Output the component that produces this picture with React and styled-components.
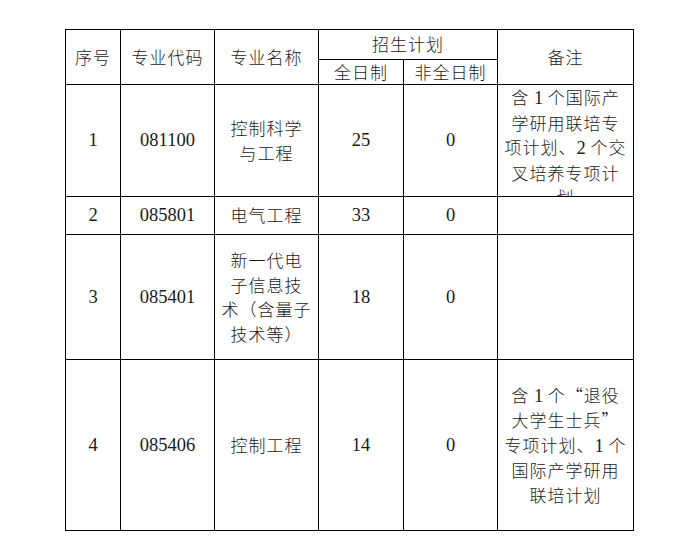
import React from "react";
import styled, { createGlobalStyle } from "styled-components";

const Global = createGlobalStyle`
  html, body { margin: 0; padding: 0; background: #fff; }
  body { font-family: "Liberation Serif", "Noto Sans CJK SC", serif; }
`;

const Page = styled.div`
  padding: 29px 0 0 65px;
`;

const Grid = styled.div`
  display: grid;
  width: max-content;
  grid-template-columns: 54px 93px 103px 84px 93px 135px;
  grid-template-rows: 29px 24px 111px 37px 124px 170px;
  gap: 1px;
  padding: 1px;
  background: #000;
`;

const Cell = styled.div`
  background: #fff;
  display: flex;
  flex-direction: column;
  align-items: center;
  justify-content: ${(p) => (p.$top ? "flex-start" : "center")};
  overflow: hidden;
  grid-row: span ${(p) => p.$rows || 1};
  grid-column: span ${(p) => p.$cols || 1};
  font-family: "Noto Sans CJK SC", sans-serif;
  font-weight: 300;
  font-size: 17px;
  letter-spacing: 1px;
  line-height: 24.5px;
  color: #1a1a1a;
  white-space: nowrap;
`;

const Line = styled.div`
  text-align: center;
`;

const Num = styled.span`
  font-family: "Liberation Serif", serif;
  font-weight: 400;
  font-size: 18.5px;
  letter-spacing: 0;
`;

const rows = [
  {
    no: "1",
    code: "081100",
    name: ["控制科学", "与工程"],
    full: "25",
    part: "0",
    top: true,
    note: [
      <>含<Num> 1 </Num>个国际产</>,
      "学研用联培专",
      <>项计划、<Num>2 </Num>个交</>,
      "叉培养专项计",
      "划",
    ],
  },
  { no: "2", code: "085801", name: ["电气工程"], full: "33", part: "0", note: [] },
  {
    no: "3",
    code: "085401",
    name: ["新一代电", "子信息技", "术（含量子", "技术等）"],
    full: "18",
    part: "0",
    note: [],
  },
  {
    no: "4",
    code: "085406",
    name: ["控制工程"],
    full: "14",
    part: "0",
    note: [
      <>含<Num> 1 </Num>个“退役</>,
      "大学生士兵”",
      <>专项计划、<Num>1 </Num>个</>,
      "国际产学研用",
      "联培计划",
    ],
  },
];

export default function App() {
  return (
    <Page>
      <Global />
      <Grid>
        <Cell $rows={2}>序号</Cell>
        <Cell $rows={2}>专业代码</Cell>
        <Cell $rows={2}>专业名称</Cell>
        <Cell $cols={2}>招生计划</Cell>
        <Cell $rows={2}>备注</Cell>
        <Cell>全日制</Cell>
        <Cell>非全日制</Cell>
        {rows.map((r) => (
          <React.Fragment key={r.no}>
            <Cell><Num>{r.no}</Num></Cell>
            <Cell><Num>{r.code}</Num></Cell>
            <Cell>
              {r.name.map((l, i) => (
                <Line key={i}>{l}</Line>
              ))}
            </Cell>
            <Cell><Num>{r.full}</Num></Cell>
            <Cell><Num>{r.part}</Num></Cell>
            <Cell $top={r.top}>
              {r.note.map((l, i) => (
                <Line key={i}>{l}</Line>
              ))}
            </Cell>
          </React.Fragment>
        ))}
      </Grid>
    </Page>
  );
}
